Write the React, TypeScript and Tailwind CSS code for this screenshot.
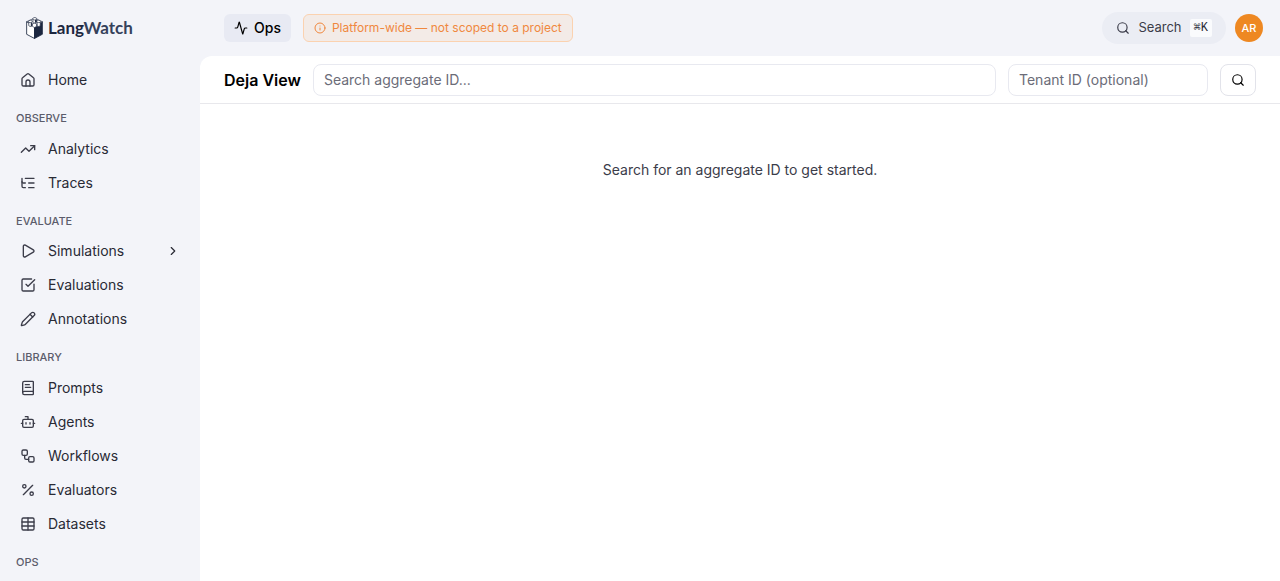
import type { ReactNode } from "react";
import {
  Activity,
  BookText,
  Bot,
  ChevronRight,
  Info,
  ListTree,
  Pencil,
  Percent,
  Play,
  Search,
  SquareCheckBig,
  Table,
  TrendingUp,
  Workflow,
} from "lucide-react";

type Item = { label: string; icon: ReactNode; expandable?: boolean };
type Group = { title: string; items: Item[] };

const iconClass = "size-4 shrink-0 text-[#3b3c49]";

const groups: Group[] = [
  {
    title: "Observe",
    items: [
      { label: "Analytics", icon: <TrendingUp className={iconClass} /> },
      { label: "Traces", icon: <ListTree className={iconClass} /> },
    ],
  },
  {
    title: "Evaluate",
    items: [
      { label: "Simulations", icon: <Play className={iconClass} />, expandable: true },
      { label: "Evaluations", icon: <SquareCheckBig className={iconClass} /> },
      { label: "Annotations", icon: <Pencil className={iconClass} /> },
    ],
  },
  {
    title: "Library",
    items: [
      { label: "Prompts", icon: <BookText className={iconClass} /> },
      { label: "Agents", icon: <Bot className={iconClass} /> },
      { label: "Workflows", icon: <Workflow className={iconClass} /> },
      { label: "Evaluators", icon: <Percent className={iconClass} /> },
      { label: "Datasets", icon: <Table className={iconClass} /> },
    ],
  },
  { title: "Ops", items: [] },
];

function HomeIcon() {
  return (
    <svg
      viewBox="0 0 24 24"
      fill="none"
      stroke="currentColor"
      strokeWidth="2"
      strokeLinecap="round"
      strokeLinejoin="round"
      className={iconClass}
      aria-hidden="true"
    >
      <path d="M3 10.200a2 2 0 0 1 .8-1.600l7-5.700a2 2 0 0 1 2.400 0l7 5.700a2 2 0 0 1 .8 1.600V19a2 2 0 0 1-2 2H5a2 2 0 0 1-2-2z" />
      <path d="M9 21v-6a3 3 0 0 1 6 0v6" />
    </svg>
  );
}

function Logo() {
  return (
    <svg viewBox="0 0 32 42" className="h-[22px] w-[17px]" aria-hidden="true">
      <path d="M1 9 16 17v24L1 33z" fill="#fff" stroke="#1c2740" strokeWidth="1.6" strokeLinejoin="round" />
      <path d="M16 17 31 9v24L16 41z" fill="#1c2740" stroke="#1c2740" strokeWidth="1.6" strokeLinejoin="round" />
      <path d="M1 9 16 2l15 7-15 8z" fill="#fff" stroke="#1c2740" strokeWidth="1.2" strokeLinejoin="round" />
      <path d="M5 9v7c0 2 5 3 6 1V9z" fill="#fff" stroke="#1c2740" strokeWidth="1.3" />
      <path d="M13 4v6c1 2 6 2 7 0V4z" fill="#fff" stroke="#1c2740" strokeWidth="1.3" />
      <path d="M21 9v8c2 2 5 1 6-1V9z" fill="#fff" stroke="#1c2740" strokeWidth="1.3" />
      <path d="M9 11v7l2-1v-6zM17 5v6l3-1V5z" fill="#1c2740" />
      <path d="M12 13l4-1 4 1v5l-4 2-4-2z" fill="#fff" stroke="#1c2740" strokeWidth="1.2" />
      <ellipse cx="8" cy="8.500" rx="3.600" ry="2.200" fill="#fff" stroke="#1c2740" strokeWidth="1.200" />
      <ellipse cx="16.500" cy="3.400" rx="3.800" ry="2.300" fill="#fff" stroke="#1c2740" strokeWidth="1.200" />
      <ellipse cx="24" cy="8.500" rx="3.600" ry="2.200" fill="#fff" stroke="#1c2740" strokeWidth="1.200" />
    </svg>
  );
}

function NavItem({ item }: { item: Item }) {
  return (
    <a href="#" className="flex h-8 items-center gap-3 rounded-lg px-3 text-sm text-[#292a35]">
      {item.icon}
      <span className="flex-1">{item.label}</span>
      {item.expandable && <ChevronRight className="size-3.5 text-[#292a35]" />}
    </a>
  );
}

export default function App() {
  return (
    <div className="flex h-screen flex-col overflow-hidden bg-[#f3f4f9] font-['Inter',sans-serif] text-[#3b3c49]">
      <header className="flex h-14 shrink-0 items-center">
        <a
          href="#"
          className="flex w-50 shrink-0 items-center gap-[5px] pl-[26px] font-['Lato',sans-serif] text-[17px] text-[#1c2740]"
        >
          <Logo />
          <span className="font-bold">
            Lang<span className="text-[#35415b]">Watch</span>
          </span>
        </a>
        <div className="flex flex-1 items-center gap-3 pr-[17px] pl-6">
          <button className="flex h-7 items-center gap-1.5 rounded-md bg-[#e8eaf3] px-2.5 text-sm font-medium text-black">
            <Activity className="size-3.5" />
            Ops
          </button>
          <div className="flex h-7 items-center gap-1.5 rounded-md border border-[#fbd2b0] bg-[#f3ebe7] px-2.5 text-xs text-[#f0883e]">
            <Info className="size-3" />
            Platform-wide — not scoped to a project
          </div>
          <div className="ml-auto flex items-center gap-[9px]">
            <button className="flex h-8 items-center gap-2 rounded-full bg-[#ebedf4] px-3.5 text-[13px]">
              <Search className="size-3.5" />
              Search
              <kbd className="flex h-[18px] items-center rounded-xs bg-[#fafbfd] px-1 font-['Liberation_Mono',monospace] text-xs font-medium text-[#292a35]">
                ⌘K
              </kbd>
            </button>
            <button className="size-7 rounded-full bg-[#ee8822] text-[11px] font-medium text-white">AR</button>
          </div>
        </div>
      </header>
      <div className="flex min-h-0 flex-1">
        <nav className="flex w-50 shrink-0 flex-col gap-0.5 overflow-hidden px-2 pt-2">
          <NavItem item={{ label: "Home", icon: <HomeIcon /> }} />
          {groups.map((group) => (
            <section key={group.title} className="flex flex-col gap-0.5">
              <h2 className="px-2 pt-3 pb-1 text-[11px] leading-normal font-medium text-[#5b5c6b] uppercase">
                {group.title}
              </h2>
              {group.items.map((item) => (
                <NavItem key={item.label} item={item} />
              ))}
            </section>
          ))}
        </nav>
        <main className="flex min-w-0 flex-1 flex-col rounded-tl-xl bg-white">
          <form className="flex h-12 shrink-0 items-center gap-3 border-b border-[#e8e8ec] px-6">
            <h1 className="shrink-0 text-base font-semibold text-black">Deja View</h1>
            <input
              aria-label="Aggregate ID"
              placeholder="Search aggregate ID..."
              className="h-8 min-w-0 flex-1 rounded-lg border border-[#e8e9f0] px-2.5 text-sm placeholder:text-[#6b6c78]"
            />
            <input
              aria-label="Tenant ID"
              placeholder="Tenant ID (optional)"
              className="h-8 w-50 rounded-lg border border-[#e8e9f0] px-2.5 text-sm placeholder:text-[#6b6c78]"
            />
            <button
              type="button"
              aria-label="Search"
              className="flex h-8 w-9 shrink-0 items-center justify-center rounded-lg border border-[#e2e3ea] text-black"
            >
              <Search className="size-3.5" />
            </button>
          </form>
          <p className="pt-14 text-center text-sm text-[#3b3c49]">Search for an aggregate ID to get started.</p>
        </main>
      </div>
    </div>
  );
}
